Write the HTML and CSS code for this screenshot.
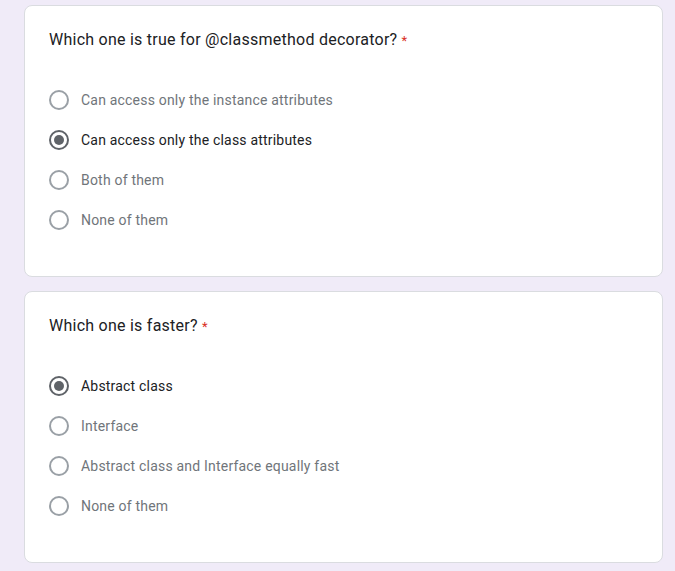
FILE: index.html
```html
<!DOCTYPE html>
<html>
<head>
<meta charset="utf-8">
<link rel="stylesheet" href="styles.css">
</head>
<body>
<div class="page">
  <div class="card">
    <div class="title">Which one is true for @classmethod decorator? <span class="req">*</span></div>
    <div class="options">
      <div class="opt"><span class="radio"></span><span class="label">Can access only the instance attributes</span></div>
      <div class="opt sel"><span class="radio"></span><span class="label">Can access only the class attributes</span></div>
      <div class="opt"><span class="radio"></span><span class="label">Both of them</span></div>
      <div class="opt"><span class="radio"></span><span class="label">None of them</span></div>
    </div>
  </div>
  <div class="card">
    <div class="title">Which one is faster? <span class="req">*</span></div>
    <div class="options">
      <div class="opt sel"><span class="radio"></span><span class="label">Abstract class</span></div>
      <div class="opt"><span class="radio"></span><span class="label">Interface</span></div>
      <div class="opt"><span class="radio"></span><span class="label">Abstract class and Interface equally fast</span></div>
      <div class="opt"><span class="radio"></span><span class="label">None of them</span></div>
    </div>
  </div>
</div>
</body>
</html>
```
FILE: styles.css
```css
html, body {
  margin: 0;
  padding: 0;
  background: #f0ebf8;
  font-family: Roboto, "Liberation Sans", Arial, sans-serif;
}
.page {
  padding: 4.5px 12px 0 24px;
  display: flex;
  flex-direction: column;
  gap: 13.5px;
}
.card {
  background: #fff;
  border: 1px solid #dadce0;
  border-radius: 8px;
  height: 272.5px;
  box-sizing: border-box;
  padding: 22.5px 24px 0 24px;
}
.title {
  font-size: 16px;
  line-height: 24px;
  color: #202124;
  letter-spacing: 0.25px;
}
.req {
  color: #d93025;
  font-size: 13px;
}
.options {
  margin-top: 27px;
  display: flex;
  flex-direction: column;
}
.opt {
  height: 40px;
  display: flex;
  align-items: center;
  gap: 12px;
}
.radio {
  width: 20px;
  height: 20px;
  box-sizing: border-box;
  border: 2px solid #9aa0a6;
  border-radius: 50%;
  display: flex;
  align-items: center;
  justify-content: center;
  flex: none;
}
.label {
  font-size: 14px;
  color: #70757a;
  letter-spacing: 0.2px;
}
.sel .radio {
  border-color: #5f6368;
}
.sel .radio::after {
  content: "";
  width: 10px;
  height: 10px;
  border-radius: 50%;
  background: #5f6368;
}
.sel .label {
  color: #202124;
}
```
